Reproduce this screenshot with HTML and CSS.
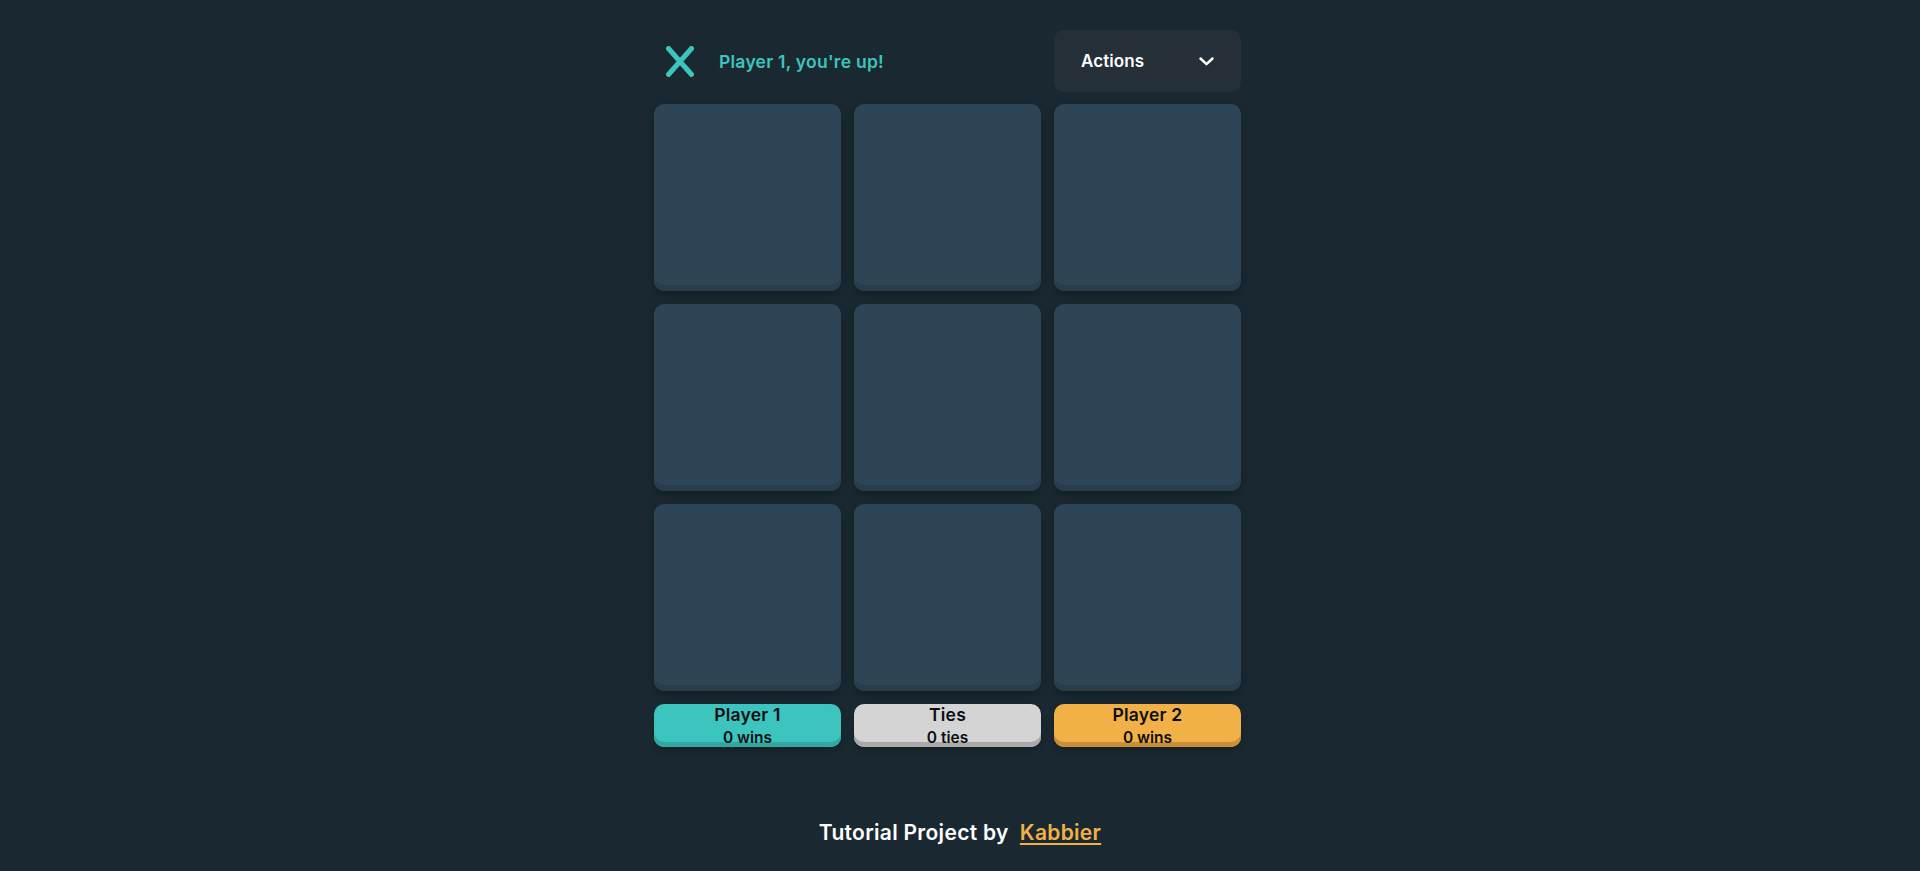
FILE: index.html
```html
<!DOCTYPE html>
<html lang="en">
<head>
<meta charset="utf-8">
<title>Tic Tac Toe</title>
<link rel="stylesheet" href="styles.css">
</head>
<body>
<main class="game">
  <header class="turn-bar">
    <div class="turn">
      <svg class="turn-icon" width="28" height="31" viewBox="0 0 28 31" aria-hidden="true">
        <path d="M2.5 2.5 L25.5 28.5 M25.5 2.5 L2.5 28.5" fill="none" stroke="#3cc5be" stroke-width="5" stroke-linecap="round"/>
      </svg>
      <p class="turn-text">Player 1, you're up!</p>
    </div>
    <button class="actions" type="button">
      <span>Actions</span>
      <svg width="15" height="9" viewBox="0 0 15 9" aria-hidden="true">
        <path d="M1.5 1.5 L7.5 7.2 L13.5 1.5" fill="none" stroke="#ffffff" stroke-width="2.5" stroke-linecap="round" stroke-linejoin="round"/>
      </svg>
    </button>
  </header>
  <div class="board">
    <div class="cell"></div><div class="cell"></div><div class="cell"></div>
    <div class="cell"></div><div class="cell"></div><div class="cell"></div>
    <div class="cell"></div><div class="cell"></div><div class="cell"></div>
  </div>
  <div class="scores">
    <div class="score score-p1"><p class="score-title">Player 1</p><p class="score-value">0 wins</p></div>
    <div class="score score-ties"><p class="score-title">Ties</p><p class="score-value">0 ties</p></div>
    <div class="score score-p2"><p class="score-title">Player 2</p><p class="score-value">0 wins</p></div>
  </div>
</main>
<footer class="footer">
  <p>Tutorial Project by&nbsp; <a class="footer-link" href="#">Kabbier</a></p>
</footer>
</body>
</html>
```

FILE: styles.css
```css
* { box-sizing: border-box; }

html, body { margin: 0; padding: 0; }

body {
  min-height: 100vh;
  height: 100vh;
  background: #1a2931;
  font-family: Inter, "Noto Sans", sans-serif;
  font-weight: 600;
  display: flex;
  flex-direction: column;
}

.game {
  width: 612px;
  margin: 0 auto;
  padding-top: 30px;
}

.turn-bar {
  width: 587px;
  height: 62px;
  display: flex;
  align-items: center;
  justify-content: space-between;
  margin-bottom: 12px;
}

.turn {
  display: flex;
  align-items: center;
  padding-left: 12px;
}

.turn-icon { display: block; margin-right: 25px; }

.turn-text {
  margin: 0;
  color: #3cc5be;
  font-size: 17.5px;
  letter-spacing: 0.25px;
}

.actions {
  width: 187px;
  height: 62px;
  border: none;
  border-radius: 10px;
  background: #252f37;
  color: #ffffff;
  font-family: inherit;
  font-weight: 600;
  font-size: 17px;
  letter-spacing: 0.1px;
  display: flex;
  align-items: center;
  justify-content: space-between;
  padding: 0 27px;
}

.actions svg { display: block; }

.board {
  width: 587px;
  display: grid;
  grid-template-columns: repeat(3, 187px);
  grid-auto-rows: 187px;
  gap: 13px;
}

.cell {
  background: #2e4555;
  border-radius: 10px;
  box-shadow: inset 0 -6px 0 #293d4b, 0 4px 8px rgba(0, 0, 0, 0.28);
}

.scores {
  width: 587px;
  margin-top: 13px;
  display: grid;
  grid-template-columns: repeat(3, 187px);
  gap: 13px;
}

.score {
  height: 43px;
  padding-top: 1px;
  border-radius: 10px;
  text-align: center;
  color: #0c0f12;
  box-shadow: inset 0 -5px 0 var(--band), 0 3px 6px rgba(0, 0, 0, 0.25);
}

.score-p1 { background: #3cc5be; --band: #33a8a2; }
.score-ties { background: #d4d4d4; --band: #a9a9a9; }
.score-p2 { background: #f2b147; --band: #c98f37; }

.score-title {
  margin: 0;
  font-size: 17.5px;
  line-height: 20px;
  font-weight: 600;
  letter-spacing: 0.2px;
}

.score-value {
  margin: 4px 0 0;
  font-size: 15.5px;
  line-height: 18px;
  font-weight: 600;
}

.footer {
  margin-top: auto;
  padding-bottom: 25px;
  text-align: center;
  color: #ffffff;
  font-size: 21px;
  letter-spacing: 0.3px;
}

.footer p { margin: 0; line-height: 26px; }

.footer-link {
  color: #f2b147;
  text-decoration: underline;
  text-underline-offset: 3px;
}
```
